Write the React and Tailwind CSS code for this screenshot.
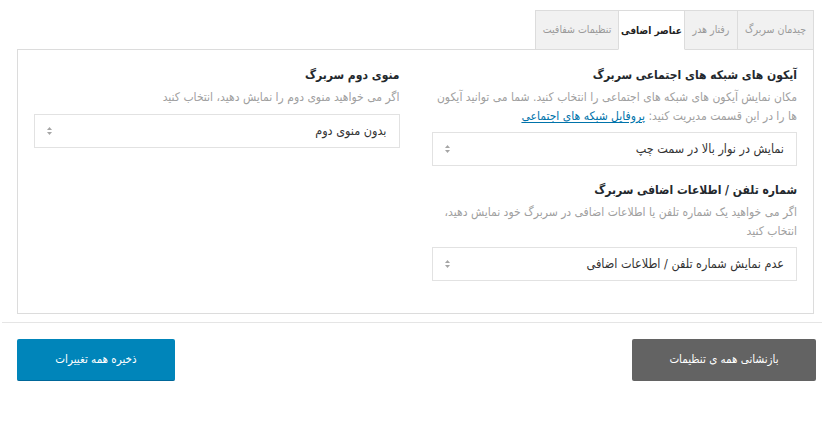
const tabs = [
  { label: "چیدمان سربرگ", w: "w-[77px]" },
  { label: "رفتار هدر", w: "w-[54px]" },
  { label: "عناصر اضافی", w: "w-[67px]", active: true },
  { label: "تنظیمات شفافیت", w: "w-[84px]" },
]

const SortArrows = () => (
  <svg width="7" height="10" viewBox="0 0 7 10" className="text-[#a5a5a5]">
    <path d="M3.5 1 L6 4 H1 Z" fill="currentColor" />
    <path d="M3.5 9 L6 6 H1 Z" fill="currentColor" />
  </svg>
)

const FakeSelect = ({ value, className = "" }) => (
  <div className={`h-[34px] border border-[#e2e2e2] bg-white flex items-center justify-between pr-[12px] pl-[11px] ${className}`}>
    <span className="text-[12.5px] text-[#333]">{value}</span>
    <SortArrows />
  </div>
)

const Field = ({ title, children }) => (
  <div>
    <h3 className="text-[12px] leading-[20px] font-bold text-[#23282d]">{title}</h3>
    {children}
  </div>
)

export default function App() {
  return (
    <div dir="rtl" className="w-[822px] h-[429px] bg-white font-['DejaVu_Sans_Condensed','DejaVu_Sans',sans-serif]">
      <div className="pt-[10px] mr-[8px] ml-[17px]">
        <div className="flex">
          {tabs.map((t) => (
            <div
              key={t.label}
              className={`${t.w} h-[40px] -ml-px flex items-center justify-center whitespace-nowrap border border-[#dcdcdc] ${
                t.active
                  ? "bg-white border-b-white text-[#222] text-[10px] font-bold relative z-10"
                  : "bg-[#f1f1f1] text-[#999] text-[10.5px]"
              }`}
            >
              {t.label}
            </div>
          ))}
        </div>

        <div className="-mt-px border border-[#dcdcdc] pt-[15px] pb-[32px] px-[16px] grid grid-cols-2 gap-x-[32px]">
          <div>
            <Field title="آیکون های شبکه های اجتماعی سربرگ">
              <p className="mt-[3px] text-[12px] leading-[19px] text-[#a0a0a0]">
                مکان نمایش آیکون های شبکه های اجتماعی را انتخاب کنید. شما می توانید آیکون ها را در این قسمت مدیریت کنید:{" "}
                <a className="text-[#0073aa] underline underline-offset-2">پروفایل شبکه های اجتماعی</a>
              </p>
              <FakeSelect value="نمایش در نوار بالا در سمت چپ" className="mt-[6px]" />
            </Field>
            <div className="mt-[14px]">
              <Field title="شماره تلفن / اطلاعات اضافی سربرگ">
                <p className="mt-[3px] text-[12px] leading-[19px] text-[#a0a0a0]">
                  اگر می خواهید یک شماره تلفن یا اطلاعات اضافی در سربرگ خود نمایش دهید، انتخاب کنید
                </p>
                <FakeSelect value="عدم نمایش شماره تلفن / اطلاعات اضافی" className="mt-[6px]" />
              </Field>
            </div>
          </div>
          <div>
            <Field title="منوی دوم سربرگ">
              <p className="mt-[3px] text-[12px] leading-[19px] text-[#a0a0a0]">
                اگر می خواهید منوی دوم را نمایش دهید، انتخاب کنید
              </p>
              <FakeSelect value="بدون منوی دوم" className="mt-[7px]" />
            </Field>
          </div>
        </div>
      </div>

      <div className="mt-[8px] ml-[2px] border-t border-[#e5e5e5]" />

      <div className="mt-[16px] mr-[6px] ml-[17px] flex justify-between">
        <button className="w-[184px] h-[42px] rounded-[2px] bg-[#636363] text-white text-[11.5px]">
          بازنشانی همه ی تنظیمات
        </button>
        <button className="w-[158px] h-[42px] rounded-[2px] bg-[#0085ba] border-b border-[#006799] text-white text-[11.5px]">
          ذخیره همه تغییرات
        </button>
      </div>
    </div>
  )
}
